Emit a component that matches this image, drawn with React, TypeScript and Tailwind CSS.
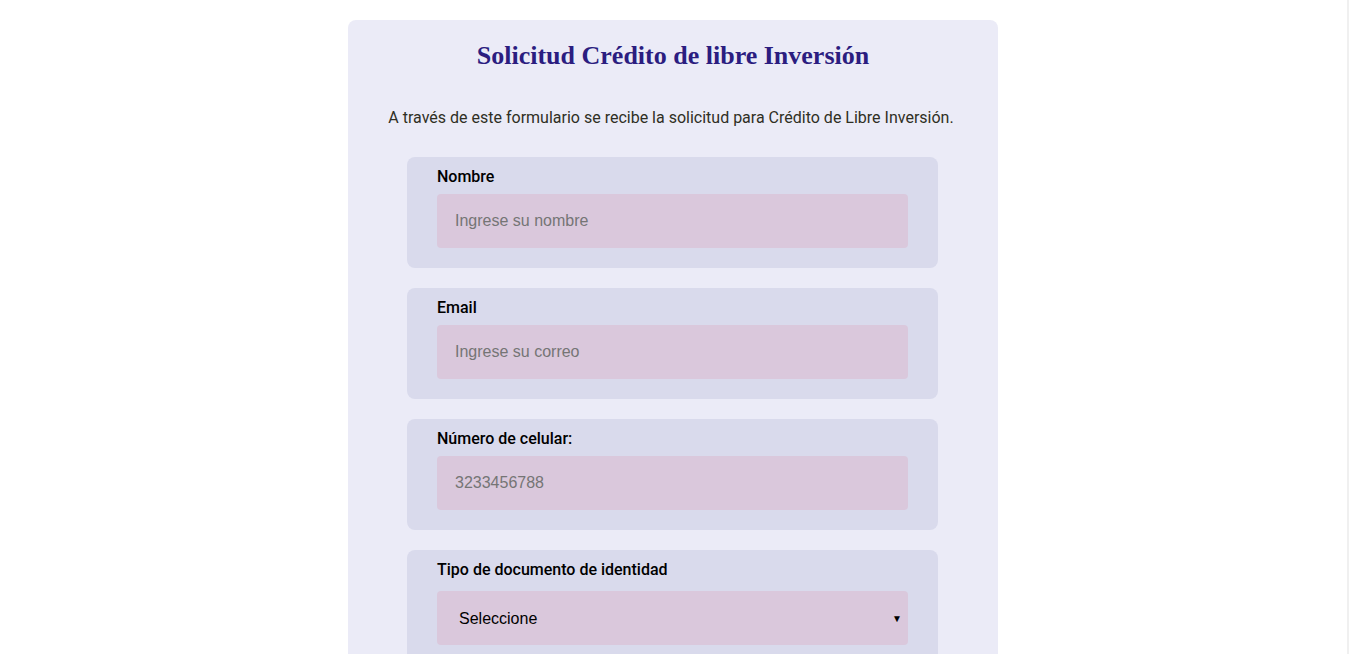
const fields = [
  { label: 'Nombre', placeholder: 'Ingrese su nombre', type: 'text' },
  { label: 'Email', placeholder: 'Ingrese su correo', type: 'email' },
  { label: 'Número de celular:', placeholder: '3233456788', type: 'tel' },
]

function Field({ label, children }: { label: string; children: React.ReactNode }) {
  return (
    <div className="w-[531px] rounded-lg bg-[#d9daec] px-[30px] pt-[10px] pb-5">
      <label className="block pb-[7px] text-base font-medium leading-5 text-black [font-family:Roboto,sans-serif]">
        {label}
      </label>
      {children}
    </div>
  )
}

export default function App() {
  return (
    <div className="h-[654px] w-full overflow-hidden border-r-2 border-[#f0f0f0] bg-white">
      <div className="flex justify-center pt-5 pr-px">
        <section className="flex w-[650px] flex-col items-center rounded-lg bg-[#ebebf7] pt-5 pb-10">
          <h1 className="text-[26px] font-bold leading-8 text-[#2b1d80] [font-family:'Liberation_Serif',serif]">
            Solicitud Crédito de libre Inversión
          </h1>
          <p className="mt-[34px] mr-1 text-base leading-6 text-[#2f2f24] [font-family:Roboto,sans-serif]">
            A través de este formulario se recibe la solicitud para Crédito de Libre Inversión.
          </p>
          <div className="mt-[27px] mr-px flex flex-col gap-5">
            {fields.map((f) => (
              <Field key={f.label} label={f.label}>
                <input
                  type={f.type}
                  placeholder={f.placeholder}
                  className="block h-[54px] w-full rounded-sm bg-[#dac8dc] px-[18px] text-base text-black outline-none placeholder:text-[#757575] [font-family:'Liberation_Sans',Arial,sans-serif]"
                />
              </Field>
            ))}
            <Field label="Tipo de documento de identidad">
              <div className="relative mt-1">
                <select
                  defaultValue=""
                  className="block h-[54px] w-full appearance-none rounded-sm bg-[#dac8dc] px-[22px] pt-px text-base text-black outline-none [font-family:'Liberation_Sans',Arial,sans-serif]"
                >
                  <option value="">Seleccione</option>
                  <option value="cc">Cédula de ciudadanía</option>
                  <option value="ce">Cédula de extranjería</option>
                  <option value="pa">Pasaporte</option>
                </select>
                <span className="pointer-events-none absolute top-1/2 right-[6px] -translate-y-1/2 text-[10px] text-black">
                  ▼
                </span>
              </div>
            </Field>
          </div>
        </section>
      </div>
    </div>
  )
}
